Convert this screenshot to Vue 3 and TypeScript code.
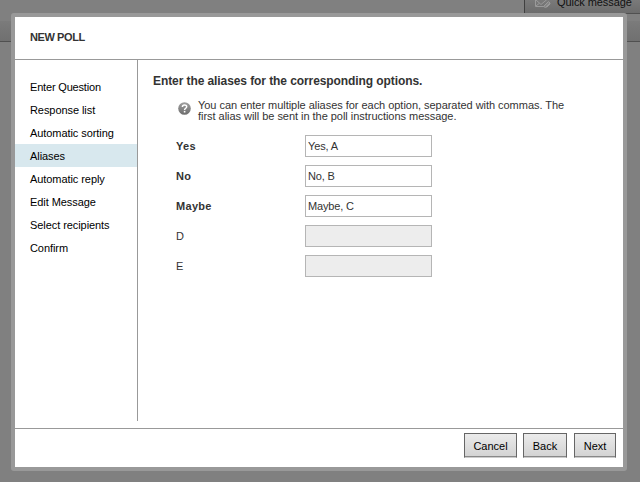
<script setup lang="ts">
import { ref } from 'vue'

interface PollOption {
  label: string
  alias: string
  enabled: boolean
}

const steps: string[] = [
  'Enter Question',
  'Response list',
  'Automatic sorting',
  'Aliases',
  'Automatic reply',
  'Edit Message',
  'Select recipients',
  'Confirm',
]
const current = ref(3)

const options = ref<PollOption[]>([
  { label: 'Yes', alias: 'Yes, A', enabled: true },
  { label: 'No', alias: 'No, B', enabled: true },
  { label: 'Maybe', alias: 'Maybe, C', enabled: true },
  { label: 'D', alias: '', enabled: false },
  { label: 'E', alias: '', enabled: false },
])
</script>

<template>
  <div class="page">
    <div class="backdrop">
      <div class="topbar">
        <div class="quick">
          <svg class="mail" width="17" height="9" viewBox="0 0 17 9">
            <path d="M0.500 -2V6.500H10M1 0L6 4.500L12.500 -1M1 6L4.500 3.200" fill="none" stroke="#9a9a9a" />
            <path d="M8.500 6.500L13.500 1.500L15 3L10.500 7.500ZM11.500 7.500L15.500 3.500" fill="#858585" stroke="#9a9a9a" />
          </svg>
          <span>Quick message</span>
        </div>
      </div>
      <div class="tabstrip"></div>
    </div>

    <div class="modal">
      <header class="head">NEW POLL</header>
      <div class="body">
        <nav class="steps">
          <div v-for="(step, i) in steps" :key="step" class="step" :class="{ active: i === current }">{{ step }}</div>
        </nav>
        <main class="content">
          <h2>Enter the aliases for the corresponding options.</h2>
          <div class="help">
            <svg width="13" height="13" viewBox="0 0 13 13">
              <defs>
                <linearGradient id="ball" x1="0" y1="0" x2="0" y2="1">
                  <stop offset="0" stop-color="#a0a0a0" />
                  <stop offset="1" stop-color="#6c6c6c" />
                </linearGradient>
              </defs>
              <circle cx="6.500" cy="6.500" r="6.300" fill="url(#ball)" />
              <path d="M4.400 5C4.400 2.300 8.700 2.300 8.700 4.800C8.700 6.300 6.600 6.200 6.600 7.900" fill="none" stroke="#fff" stroke-width="1.500" />
              <rect x="5.800" y="8.900" width="1.600" height="1.600" fill="#fff" />
            </svg>
            <p><span class="line">You can enter multiple aliases for each option, separated with commas. The</span><span class="line">first alias will be sent in the poll instructions message.</span></p>
          </div>
          <div v-for="option in options" :key="option.label" class="row">
            <label :class="{ on: option.enabled }">{{ option.label }}</label>
            <input v-model="option.alias" type="text" :disabled="!option.enabled" />
          </div>
        </main>
      </div>
      <footer class="foot">
        <button class="cancel" type="button">Cancel</button>
        <button class="back" type="button">Back</button>
        <button class="next" type="button">Next</button>
      </footer>
    </div>
  </div>
</template>

<style>
body {
  margin: 0;
  overflow: hidden;
}
</style>

<style scoped>
.page {
  position: relative;
  width: 640px;
  height: 482px;
  overflow: hidden;
  background: #808080;
  font: 11px/13px "Liberation Sans", Arial, sans-serif;
  color: #333;
}
.page * {
  box-sizing: border-box;
}
.topbar {
  display: flex;
  justify-content: flex-end;
  height: 21px;
}
.quick {
  display: flex;
  width: 116px;
  height: 14px;
  padding-left: 10px;
  border-left: 1px solid #404040;
  border-bottom: 1px solid #505050;
  background: linear-gradient(#7a7a7a, #6c6c6c);
  color: #111;
  line-height: 13px;
}
.quick span {
  margin-top: -4px;
  margin-left: 5px;
  letter-spacing: -0.08px;
  white-space: nowrap;
}
.tabstrip {
  height: 21px;
  border-bottom: 1px solid #505050;
  background: linear-gradient(#7b7b7b, #707070);
}
.modal {
  position: absolute;
  left: 11px;
  top: 13px;
  display: flex;
  flex-direction: column;
  width: 616px;
  height: 458px;
  border: 4px solid #999;
  border-radius: 3px;
  background: #fff;
}
.head {
  height: 43px;
  padding: 14px 15px 0;
  border-bottom: 1px solid #999;
  font-weight: bold;
  letter-spacing: -0.4px;
}
.body {
  display: flex;
  height: 368px;
}
.steps {
  width: 123px;
  height: 361px;
  padding-top: 15px;
  border-right: 1px solid #999;
  color: #000;
}
.step {
  height: 23px;
  padding-left: 15px;
  line-height: 24px;
  letter-spacing: -0.07px;
  white-space: nowrap;
}
.step:first-child {
  letter-spacing: -0.18px;
}
.step.active {
  background: #d8e8ee;
}
.content {
  flex: 1;
  padding: 14px 0 0 15px;
}
h2 {
  margin: 0;
  font-size: 12px;
  line-height: 14px;
  letter-spacing: -0.085px;
}
.help {
  display: flex;
  height: 47px;
  padding: 13px 0 0 25px;
}
.help svg {
  margin-top: 1px;
}
.help p {
  margin: -1px 0 0 7px;
  line-height: 11px;
  letter-spacing: -0.035px;
}
.line {
  display: block;
  white-space: nowrap;
}
.row {
  display: flex;
  height: 22px;
  margin-bottom: 8px;
  padding-left: 23px;
}
label {
  width: 129px;
  line-height: 23px;
}
label.on {
  font-weight: bold;
  letter-spacing: 0.3px;
}
input {
  width: 127px;
  height: 22px;
  margin: 0;
  padding: 0 2px 1px;
  border: 1px solid #b5b5b5;
  border-radius: 0;
  background: #fff;
  color: #333;
  font: inherit;
  letter-spacing: -0.15px;
}
input:disabled {
  background: #ededed;
}
.foot {
  display: flex;
  justify-content: flex-end;
  height: 39px;
  padding: 4px 7px 0 0;
  border-top: 1px solid #999;
}
button {
  height: 25px;
  margin: 0 0 0 6px;
  padding: 2px 0 0;
  border: 1px solid #666;
  border-bottom: 1px solid #ccc;
  border-radius: 0;
  background: linear-gradient(#ebebeb, #d2d2d2);
  box-shadow: inset 0 -1px 0 #888;
  color: #000;
  font: inherit;
}
.cancel {
  width: 53px;
}
.back {
  width: 44px;
}
.next {
  width: 42px;
  margin-left: 7px;
}
</style>
